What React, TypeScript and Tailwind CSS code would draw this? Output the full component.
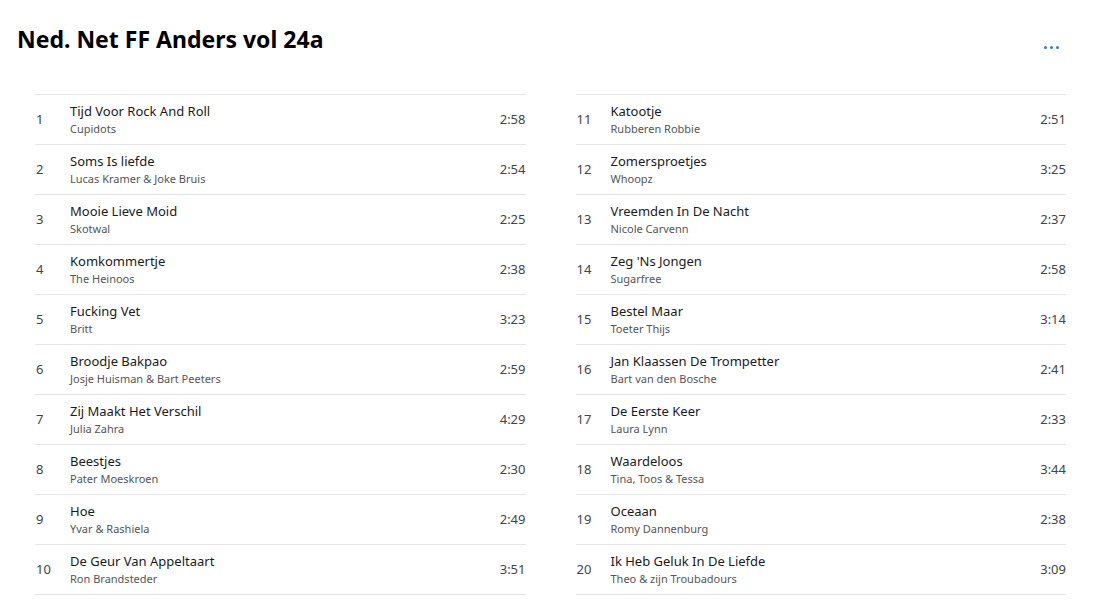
import React from "react";

const tracks = [
  ["Tijd Voor Rock And Roll", "Cupidots", "2:58"],
  ["Soms Is liefde", "Lucas Kramer & Joke Bruis", "2:54"],
  ["Mooie Lieve Moid", "Skotwal", "2:25"],
  ["Komkommertje", "The Heinoos", "2:38"],
  ["Fucking Vet", "Britt", "3:23"],
  ["Broodje Bakpao", "Josje Huisman & Bart Peeters", "2:59"],
  ["Zij Maakt Het Verschil", "Julia Zahra", "4:29"],
  ["Beestjes", "Pater Moeskroen", "2:30"],
  ["Hoe", "Yvar & Rashiela", "2:49"],
  ["De Geur Van Appeltaart", "Ron Brandsteder", "3:51"],
  ["Katootje", "Rubberen Robbie", "2:51"],
  ["Zomersproetjes", "Whoopz", "3:25"],
  ["Vreemden In De Nacht", "Nicole Carvenn", "2:37"],
  ["Zeg 'Ns Jongen", "Sugarfree", "2:58"],
  ["Bestel Maar", "Toeter Thijs", "3:14"],
  ["Jan Klaassen De Trompetter", "Bart van den Bosche", "2:41"],
  ["De Eerste Keer", "Laura Lynn", "2:33"],
  ["Waardeloos", "Tina, Toos & Tessa", "3:44"],
  ["Oceaan", "Romy Dannenburg", "2:38"],
  ["Ik Heb Geluk In De Liefde", "Theo & zijn Troubadours", "3:09"],
];

function Row({ n, t }: { n: number; t: string[] }) {
  return (
    <div className="flex items-center h-[50px] border-b border-[#e5e5e5]">
      <div className="w-[35px] pl-[1px] text-[13px] text-[#444]">{n}</div>
      <div className="flex-1 flex flex-col leading-[17px]">
        <span className="text-[13px] text-[#1a1a1a]">{t[0]}</span>
        <span className="text-[11px] text-[#555]">{t[1]}</span>
      </div>
      <div className="text-[13px] text-[#444]">{t[2]}</div>
    </div>
  );
}

export default function App() {
  return (
    <div
      className="w-[1104px] h-[601px] bg-white overflow-hidden"
      style={{ fontFamily: '"Noto Sans", sans-serif' }}
    >
      <div className="flex items-start justify-between pl-[17px] pr-[45px] pt-[24px] h-[94px]">
        <h1 className="text-[23px] font-bold text-black leading-[30px]">
          Ned. Net FF Anders vol 24a
        </h1>
        <div className="flex gap-[3px] mt-[22px]">
          <span className="w-[3px] h-[3px] rounded-full bg-[#2f7ae5]" />
          <span className="w-[3px] h-[3px] rounded-full bg-[#2f7ae5]" />
          <span className="w-[3px] h-[3px] rounded-full bg-[#2f7ae5]" />
        </div>
      </div>
      <div className="grid grid-cols-2 gap-[50px] pl-[35px] pr-[38px]">
        {[0, 10].map((start) => (
          <div key={start} className="border-t border-[#e5e5e5]">
            {tracks.slice(start, start + 10).map((t, i) => (
              <Row key={i} n={start + i + 1} t={t} />
            ))}
          </div>
        ))}
      </div>
    </div>
  );
}
